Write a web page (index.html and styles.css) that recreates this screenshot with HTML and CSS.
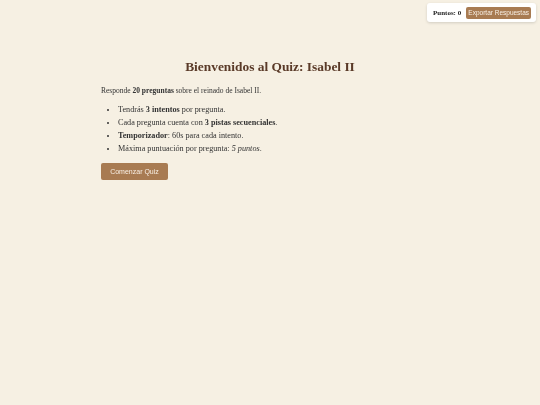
FILE: index.html
```html
<!DOCTYPE html>
<html lang="es">
<head>
<meta charset="utf-8">
<link rel="stylesheet" href="styles.css">
</head>
<body>
<div class="scorebar">
  <span class="score">Puntos: 0</span>
  <button class="export">Exportar Respuestas</button>
</div>
<main class="container">
  <h1 class="title">Bienvenidos al Quiz: Isabel II</h1>
  <p class="intro">Responde <b>20 preguntas</b> sobre el reinado de Isabel II.</p>
  <ul class="rules">
    <li>Tendrás <b>3 intentos</b> por pregunta.</li>
    <li>Cada pregunta cuenta con <b>3 pistas secuenciales</b>.</li>
    <li><b>Temporizador</b>: 60s para cada intento.</li>
    <li>Máxima puntuación por pregunta: <i>5 puntos</i>.</li>
  </ul>
  <button class="start">Comenzar Quiz</button>
</main>
</body>
</html>
```
FILE: styles.css
```css
html, body {
  margin: 0;
  padding: 0;
  background: #f6f0e3;
}
body {
  font-family: "Liberation Serif", "Times New Roman", serif;
  font-size: 8px;
  color: #333;
}
.scorebar {
  position: fixed;
  top: 3px;
  right: 4px;
  background: #fff;
  border-radius: 3px;
  box-shadow: 0 1px 3px rgba(0,0,0,0.15);
  padding: 4px 5px 3px 6px;
  display: flex;
  align-items: center;
  gap: 5px;
  will-change: transform;
}
.score {
  font-weight: bold;
  font-size: 7px;
  color: #222;
}
.export {
  font-family: "Liberation Sans", Arial, sans-serif;
  font-size: 6.5px;
  background: #a87b52;
  color: #f8efe4;
  border: none;
  border-radius: 2px;
  padding: 0;
  width: 65px;
  height: 12px;
  line-height: 12px;
}
.container {
  width: 338px;
  margin: 0 auto;
  padding-top: 57px;
  will-change: transform;
}
.title {
  text-align: center;
  font-size: 13.4px;
  color: #5a3a28;
  margin: 0 0 10px 0;
  line-height: 19px;
}
.intro {
  font-size: 7.5px;
  margin: 0 0 7px 0;
  line-height: 10px;
}
.rules {
  margin: 0 0 8px 0;
  padding-left: 17px;
}
.rules li {
  font-size: 8.2px;
  line-height: 13px;
}
.start {
  font-family: "Liberation Sans", Arial, sans-serif;
  font-size: 7px;
  background: #a87b52;
  color: #f8efe4;
  border: none;
  border-radius: 2px;
  width: 67px;
  height: 17px;
  padding: 0;
}
```
